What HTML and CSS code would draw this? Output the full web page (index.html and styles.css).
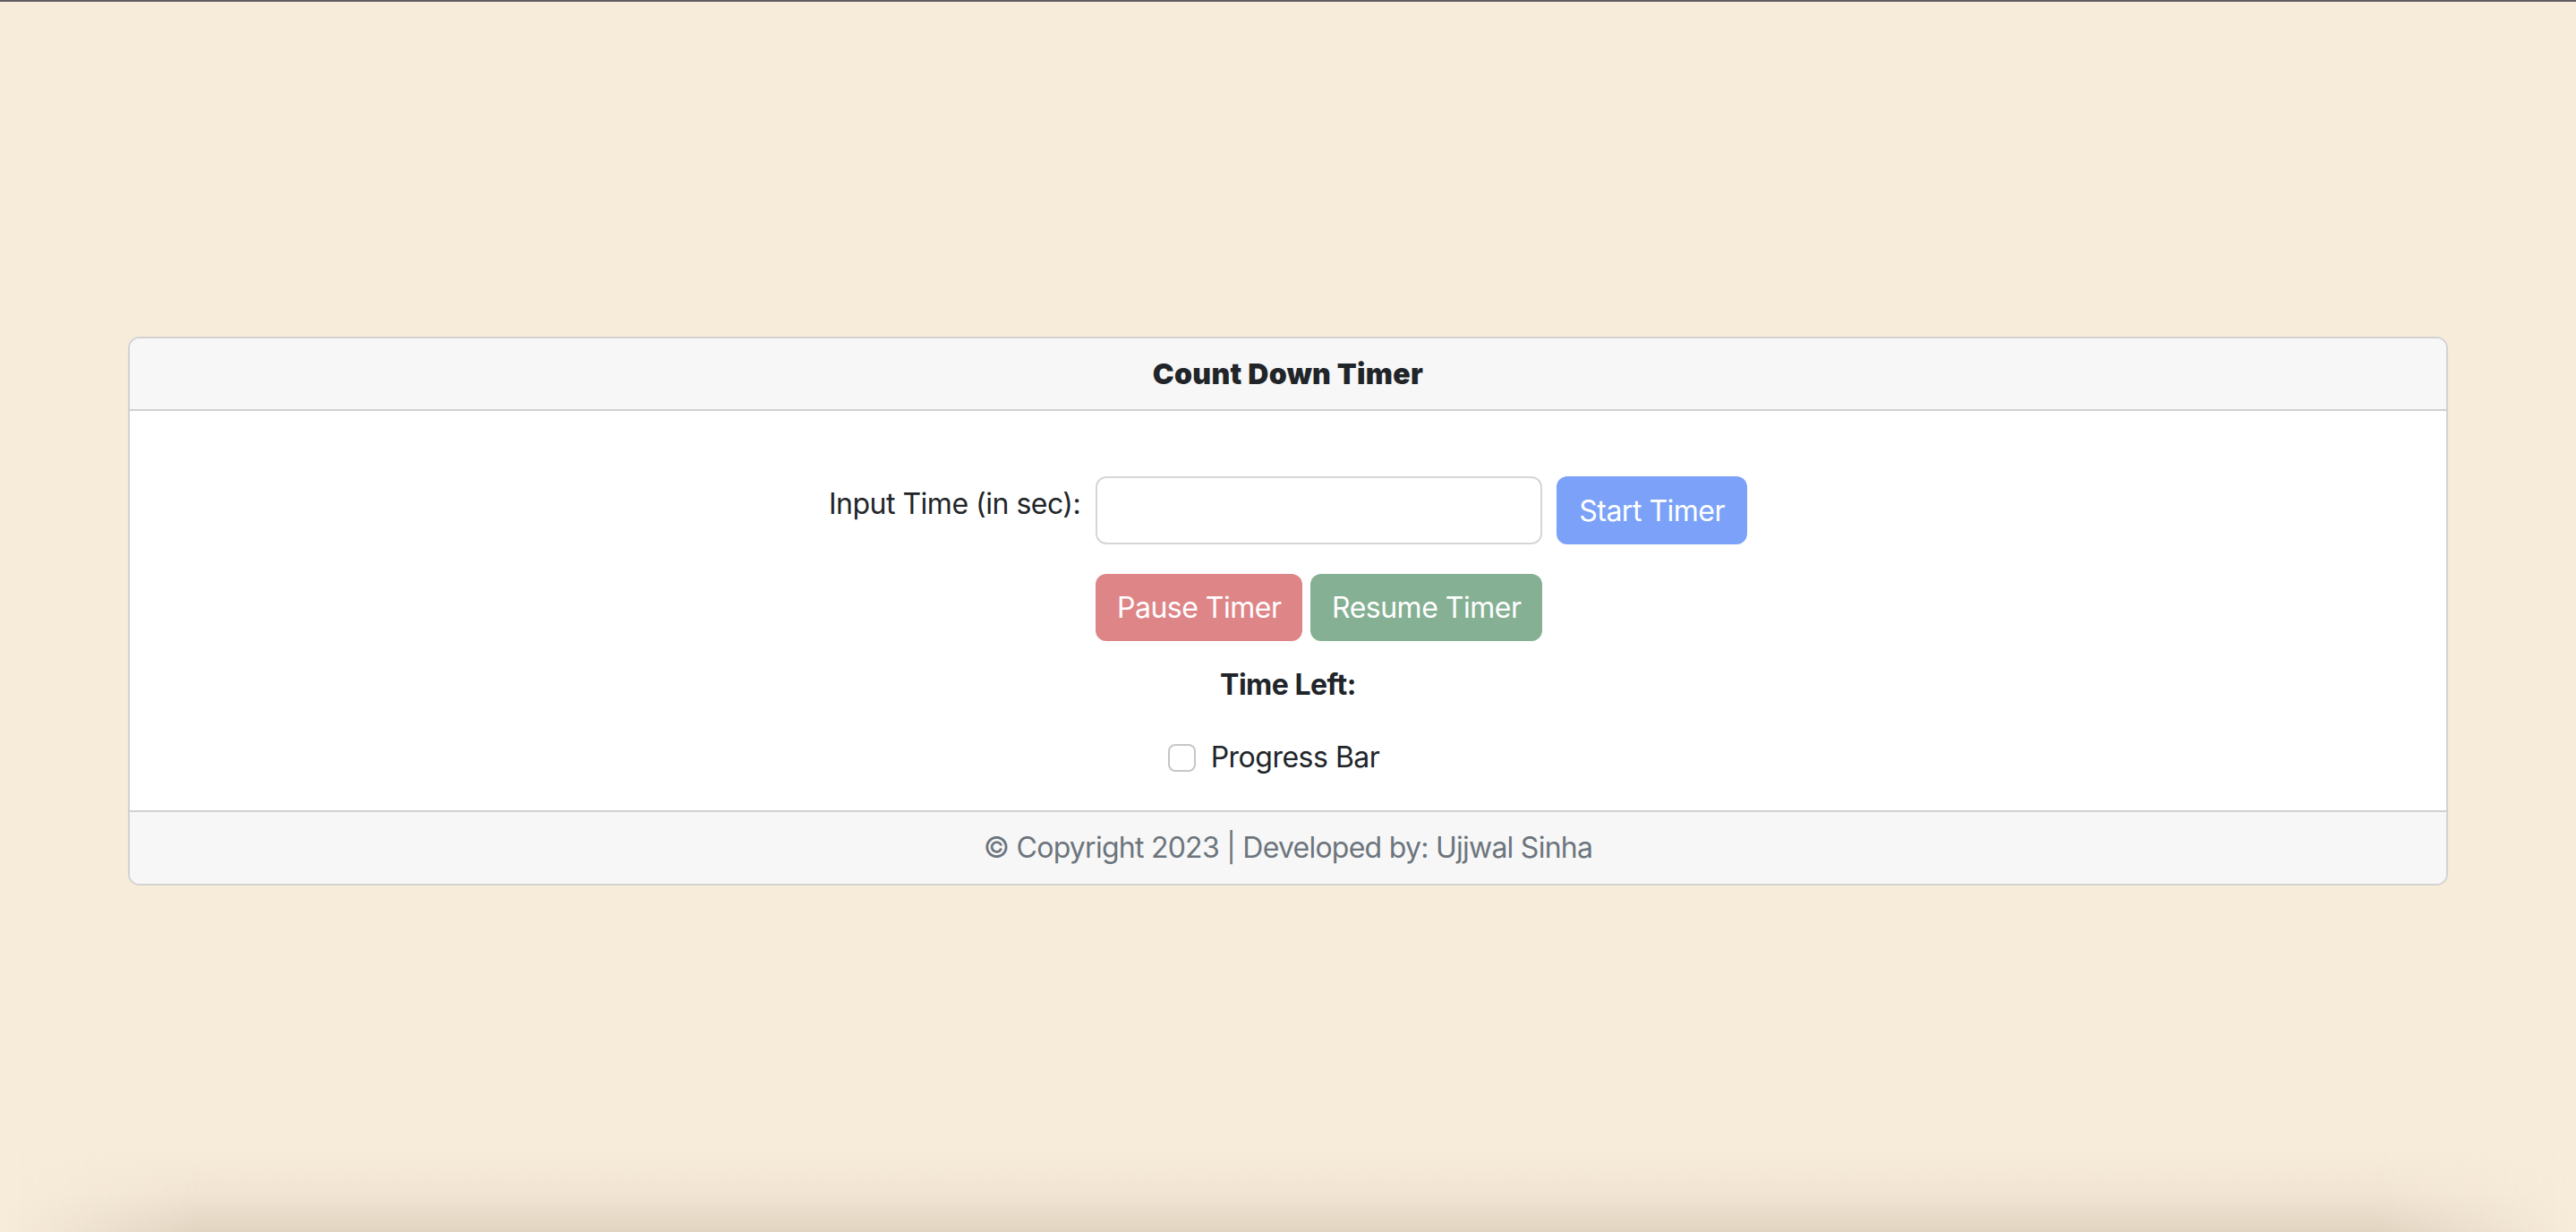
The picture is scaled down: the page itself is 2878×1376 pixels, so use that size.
FILE: index.html
```html
<!DOCTYPE html>
<html lang="en">
<head>
<meta charset="utf-8">
<title>Count Down Timer</title>
<link rel="stylesheet" href="styles.css">
</head>
<body>
<div class="topline"></div>
<main class="page">
  <section class="card">
    <header class="card-header">Count Down Timer</header>
    <div class="card-body">
      <div class="form-grid">
        <label class="label" for="t">Input Time (in sec):</label>
        <input class="input" id="t" type="text">
        <button class="btn btn-start">Start Timer</button>
        <div class="btn-row">
          <button class="btn btn-pause">Pause Timer</button>
          <button class="btn btn-resume">Resume Timer</button>
        </div>
      </div>
      <div class="time-left">Time Left:</div>
      <div class="check-row">
        <span class="checkbox"></span>
        <span class="check-label">Progress Bar</span>
      </div>
    </div>
    <footer class="card-footer">© Copyright 2023 | Developed by: Ujjwal Sinha</footer>
  </section>
</main>
<div class="window-shadow"></div>
</body>
</html>
```

FILE: styles.css
```css
html, body {
  margin: 0;
  padding: 0;
}
body {
  background: #f7ebda;
  font-family: Inter, "Noto Sans", sans-serif;
  color: #212529;
  font-size: 32px;
  letter-spacing: -0.5px;
  height: 1376px;
  overflow: hidden;
  position: relative;
}
.topline {
  height: 2px;
  background: #605e61;
}
.page {
  padding: 374px 143px 0 143px;
}
.card {
  border: 2px solid #d2d2d2;
  border-radius: 13px;
  background: #ffffff;
  overflow: hidden;
}
.card-header {
  background: #f7f7f7;
  border-bottom: 2px solid #d0d0d0;
  text-align: center;
  font-weight: 900;
  font-size: 32px;
  letter-spacing: 0.3px;
  line-height: 47px;
  padding: 16px 32px;
}
.card-body {
  padding: 73px 32px 35px;
  display: flex;
  flex-direction: column;
  align-items: center;
}
.form-grid {
  display: grid;
  grid-template-columns: auto 499px auto;
  column-gap: 16px;
  row-gap: 33px;
  align-items: center;
}
.label {
  line-height: 48px;
  padding-right: 1px;
  margin-top: -14px;
}
.input {
  box-sizing: border-box;
  height: 76px;
  width: 499px;
  border: 2px solid #d4d6d9;
  border-radius: 12px;
  background: #fff;
  font: inherit;
  padding: 0 24px;
  outline: none;
}
.btn {
  border: none;
  border-radius: 12px;
  color: #fff;
  font-family: inherit;
  font-size: 32px;
  letter-spacing: -0.5px;
  line-height: 48px;
  padding: 14px 25px 13px;
  cursor: pointer;
  white-space: nowrap;
}
.btn-start {
  background: #7ba2f8;
  height: 76px;
}
.btn-row {
  grid-column: 2;
  display: flex;
  gap: 9px;
}
.btn-pause {
  background: #de8588;
  width: 231px;
  height: 75px;
  padding: 0;
}
.btn-resume {
  background: #85b093;
  width: 259px;
  height: 75px;
  padding: 0;
}
.time-left {
  font-weight: 700;
  line-height: 48px;
  margin-top: 25px;
}
.check-row {
  display: flex;
  align-items: center;
  gap: 17px;
  margin-top: 33px;
  line-height: 48px;
  margin-right: 32px;
}
.checkbox {
  box-sizing: border-box;
  width: 31px;
  height: 31px;
  border: 2px solid #c6c6c6;
  border-radius: 8px;
  background: #fff;
}
.card-footer {
  background: #f7f7f7;
  border-top: 2px solid #d0d0d0;
  text-align: center;
  color: #6c757d;
  letter-spacing: -0.75px;
  line-height: 48px;
  padding: 16px 32px;
}
.window-shadow {
  position: absolute;
  left: 0;
  right: 0;
  bottom: 0;
  height: 90px;
  pointer-events: none;
  background:
    linear-gradient(to right, #f7ebda 0, rgba(247,235,218,0) 220px, rgba(247,235,218,0) calc(100% - 220px), #f7ebda 100%),
    linear-gradient(to bottom, rgba(120,90,50,0) 0, rgba(120,90,50,0.04) 50%, rgba(100,80,50,0.14) 100%);
  border-radius: 0 0 14px 14px;
}
```
